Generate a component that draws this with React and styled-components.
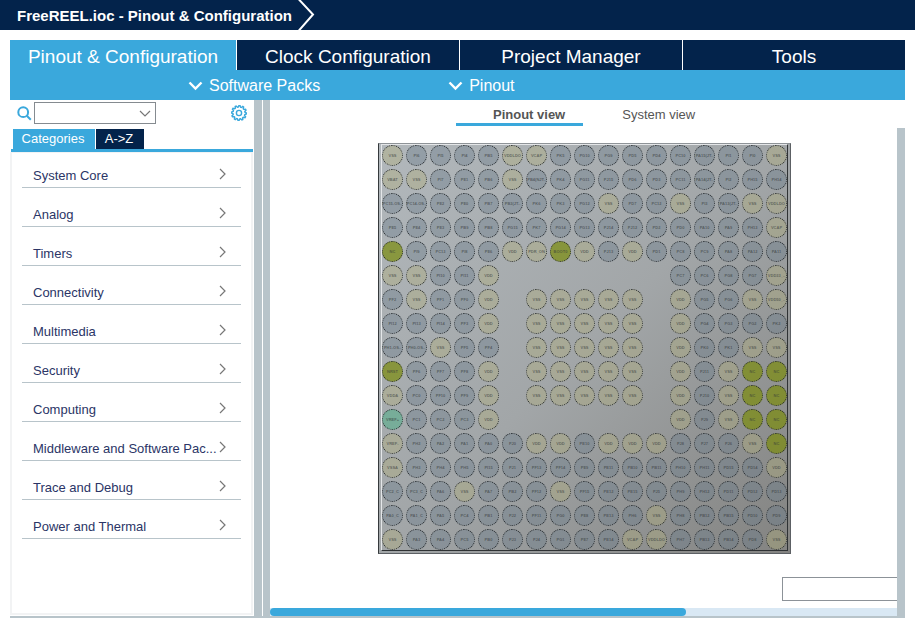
import React, { useState } from "react";
import styled, { createGlobalStyle } from "styled-components";

const navy = "#03234b";
const blue = "#3aa8dc";
const grey = "#b8c4ca";

const GlobalStyle = createGlobalStyle`
  * {
    box-sizing: border-box;
  }
  body {
    margin: 0;
    background: #fff;
    font-family: "Liberation Sans", Arial, sans-serif;
    font-size: 13px;
  }
  button {
    margin: 0;
    padding: 0;
    border: 0;
    background: none;
    font: inherit;
    color: inherit;
    cursor: pointer;
  }
`;

const TitleBar = styled.header`
  display: flex;
  align-items: center;
  height: 30px;
  padding-left: 17px;
  background: ${navy};
  color: #fff;
`;

const Title = styled.h1`
  margin: 0;
  padding-top: 2px;
  font-size: 15px;
  font-weight: bold;
  line-height: 28px;
  white-space: nowrap;
`;

const Crumb = styled.svg`
  width: 18px;
  height: 30px;
  margin-left: 5px;
  fill: none;
  stroke: #fff;
  stroke-width: 2;
`;

const Page = styled.main`
  padding: 10px;
`;

const MainTabs = styled.nav`
  display: grid;
  grid-template-columns: 226px 1fr 1fr 1fr;
  gap: 1px;
`;

const MainTab = styled.button`
  && {
    height: 30px;
    padding-top: 4px;
    background: ${(props) => (props.$active ? blue : navy)};
    color: #fff;
    font-size: 19px;
    line-height: 26px;
    white-space: nowrap;
  }
`;

const SubBar = styled.div`
  display: flex;
  gap: 128px;
  height: 30px;
  padding: 0 178px;
  background: ${blue};
`;

const SubMenu = styled.button`
  && {
    display: flex;
    align-items: center;
    gap: 6px;
    padding-top: 2px;
    color: #fff;
    font-size: 16px;
    white-space: nowrap;
  }
`;

const Icon = styled.svg`
  display: block;
  flex: none;
  fill: none;
  stroke: ${(props) => props.$color || "#fff"};
  stroke-width: ${(props) => props.$weight || 1};
`;

const Body = styled.div`
  display: flex;
  border-bottom: 2px solid ${grey};
`;

const Sidebar = styled.aside`
  display: flex;
  flex-direction: column;
  flex: none;
  width: 244px;
  padding: 2px 1px 1px 0;
`;

const SearchRow = styled.div`
  display: flex;
  align-items: center;
  height: 22px;
  padding: 0 6px 0 7px;
`;

const SearchField = styled.div`
  display: grid;
  align-items: center;
  width: 122px;
  height: 22px;
  margin-left: 2px;
  margin-right: auto;

  & > * {
    grid-area: 1 / 1;
  }
  svg {
    justify-self: end;
    margin-right: 5px;
    pointer-events: none;
  }
`;

const SearchSelect = styled.select`
  width: 100%;
  height: 22px;
  border: 1px solid #858b90;
  border-radius: 0;
  background: #fff;
  appearance: none;
`;

const SideTabs = styled.div`
  display: flex;
  gap: 1px;
  margin: 5px 0 0 1px;
  padding-left: 2px;
  border-bottom: 3px solid ${blue};
`;

const SideTab = styled.button`
  && {
    width: ${(props) => (props.$active ? "82px" : "48px")};
    height: 20px;
    padding-right: 2px;
    background: ${(props) => (props.$active ? blue : navy)};
    color: #fff;
    line-height: 20px;
  }
`;

const CategoryList = styled.ul`
  flex: 1;
  margin: 0;
  padding: 0 10px;
  border: solid #f2f3f4;
  border-width: 1px 2px 2px;
  list-style: none;
`;

const Category = styled.button`
  && {
    display: flex;
    align-items: flex-end;
    justify-content: space-between;
    width: 100%;
    height: 39px;
    padding: 0 15px 3px 11px;
    border-bottom: 1px solid ${grey};
    color: #2b3566;
    line-height: 16px;
    white-space: nowrap;
  }
  li:first-child > & {
    height: 35px;
  }
  svg {
    margin-bottom: 4px;
  }
`;

const Splitter = styled.div`
  display: grid;
  grid-template-columns: 8px 7px;
  gap: 1px;
  flex: none;
  &::before,
  &::after {
    content: "";
    background: ${grey};
  }
`;

const Viewer = styled.section`
  flex: 1;
  min-width: 0;
`;

const ViewTabs = styled.div`
  display: flex;
  gap: 2px;
  height: 28px;
  padding-left: 186px;
`;

const ViewTab = styled.button`
  && {
    height: 26px;
    padding: 5px 18px 0 37px;
    border-bottom: 3px solid ${(props) => (props.$active ? blue : "transparent")};
    color: #555;
    font-weight: ${(props) => (props.$active ? "bold" : "normal")};
    white-space: nowrap;
  }
`;

const CanvasRow = styled.div`
  display: grid;
  grid-template-columns: minmax(0, 1fr) 8px;
`;

const Canvas = styled.div`
  display: flex;
  flex-direction: column;
  padding: 15px 0 0 2px;
`;

const VScroll = styled.div`
  background: ${grey};
`;

const Chip = styled.div`
  align-self: center;
  padding: 0 2px 2px;
  border: 1px solid #5c6064;
  border-top-color: #8e9397;
  border-left-color: #35393c;
  background: linear-gradient(135deg, #b2b8bc 0%, #a2a6a8 50%, #838381 100%);
`;

const PinGrid = styled.div`
  display: grid;
  grid-template-columns: repeat(17, 21px);
  grid-auto-rows: 21px;
  gap: 3px;
  border: 1px solid #2f3234;
  border-top-color: #e4e6e8;
  border-left-color: #e4e6e8;
`;

const pinColors = {
  io: "rgba(104, 122, 138, 0.4)",
  power: "rgba(176, 172, 122, 0.4)",
  fixed: "rgba(124, 140, 16, 0.72)",
  vref: "rgba(90, 175, 140, 0.62)",
};

const Pin = styled.button`
  && {
    display: flex;
    align-items: center;
    justify-content: center;
    border: 1px dotted #25292c;
    border-radius: 50%;
    background: ${(props) => pinColors[props.$kind]};
    color: rgba(50, 54, 56, 0.6);
    font-size: 4px;
    font-weight: bold;
    line-height: 4px;
    white-space: nowrap;
  }
`;

const PinSearch = styled.input`
  align-self: flex-end;
  width: 115px;
  height: 24px;
  margin: 23px 0 7px;
  border: 1px solid #8c9298;
  border-right: 0;
  border-radius: 0;
  background: #fff;
`;

const HScroll = styled.div`
  height: 8px;
  background: #d9e8f4;
`;

const HThumb = styled.div`
  width: 66.3%;
  height: 8px;
  border-radius: 4px;
  background: ${blue};
`;

const categories = [
  "System Core",
  "Analog",
  "Timers",
  "Connectivity",
  "Multimedia",
  "Security",
  "Computing",
  "Middleware and Software Pac...",
  "Trace and Debug",
  "Power and Thermal",
];

// one line per ball row, "-" is an empty position
const balls = `
VSS PI6 PI5 PI4 PB5 VDDLDO VCAP PK5 PG10 PG9 PD5 PD4 PC10 PA15(JT.. PI1 PI0 VSS
VBAT VSS PI7 PE1 PB6 VSS PB4(NJT.. PK4 PG11 PJ15 PD6 PD3 PC11 PA14(JT.. PI2 PH15 PH14
PC15-OS.. PC14-OS.. PE2 PE0 PB7 PB3(JT.. PK6 PK3 PG12 VSS PD7 PC12 VSS PI3 PA13(JT.. VSS VDDLDO
PE5 PE4 PE3 PB9 PB8 PG15 PK7 PG14 PG13 PJ14 PJ12 PD2 PD0 PA10 PA9 PH13 VCAP
NC PI9 PC13 PI8 PE6 VDD PDR_ON BOOT0 VDD PJ13 VDD PD1 PC8 PC9 PA8 PA12 PA11
VSS VSS PI10 PI11 VDD - - - - - - - PC7 PC6 PG8 PG7 VDD33_..
PF2 VSS PF1 PF0 VDD - VSS VSS VSS VSS VSS - VDD PG5 PG6 VSS VDD50_..
PI12 PI13 PI14 PF3 VDD - VSS VSS VSS VSS VSS - VDD PG4 PG3 PG2 PK2
PH1-OS.. PH0-OS.. VSS PF5 PF4 - VSS VSS VSS VSS VSS - VDD PK0 PK1 VSS VSS
NRST PF6 PF7 PF8 VDD - VSS VSS VSS VSS VSS - VDD PJ11 VSS NC NC
VDDA PC0 PF10 PF9 VDD - VSS VSS VSS VSS VSS - VDD PJ10 VSS NC NC
VREF+ PC1 PC2 PC3 VDD - - - - - - - VDD PJ9 VSS NC NC
VREF- PH2 PA2 PA1 PA0 PJ0 VDD VDD PE10 VDD VDD VDD PJ8 PJ7 PJ6 VSS NC
VSSA PH3 PH4 PH5 PI15 PJ1 PF13 PF14 PE9 PE11 PB10 PB11 PH10 PH11 PD15 PD14 VDD
PC2_C PC3_C PA6 VSS PA7 PB2 PF12 VSS PF15 PE12 PE15 PJ5 PH9 PH12 PD11 PD12 PD13
PA0_C PA1_C PA5 PC4 PB1 PJ2 PF11 PG0 PE8 PE13 PH6 VSS PH8 PB12 PB15 PD10 PD9
VSS PA3 PA4 PC5 PB0 PJ3 PJ4 PG1 PE7 PE14 VCAP VDDLDO PH7 PB13 PB14 PD8 VSS
`
  .trim()
  .split(/\s+/);

const pinKind = (name) => {
  if (name === "VREF+") return "vref";
  if (["NC", "BOOT0", "NRST"].includes(name)) return "fixed";
  if (name.startsWith("V") || name === "PDR_ON") return "power";
  return "io";
};

// 12 small teeth round the gear body
const gearPath = () => {
  const points = [];
  for (let i = 0; i < 48; i++) {
    const r = i % 4 < 2 ? 7.6 : 6;
    const a = (i / 48) * Math.PI * 2;
    points.push(`${(8 + r * Math.cos(a)).toFixed(2)} ${(8 + r * Math.sin(a)).toFixed(2)}`);
  }
  return `M${points.join("L")}Z`;
};

const MenuArrow = () => (
  <Icon width="15" height="10" viewBox="0 0 15 10" $weight={2.4}>
    <path d="M1.5 1.5L7.5 7.5L13.5 1.5" />
  </Icon>
);

const ChipView = () => (
  <Chip>
    <PinGrid>
      {balls.map((name, i) =>
        name === "-" ? (
          <span key={i} />
        ) : (
          <Pin key={i} $kind={pinKind(name)}>
            {name}
          </Pin>
        )
      )}
    </PinGrid>
  </Chip>
);

export default function App() {
  const [tab, setTab] = useState("Pinout & Configuration");
  const [sideTab, setSideTab] = useState("Categories");
  const [view, setView] = useState("Pinout view");

  return (
    <>
      <GlobalStyle />
      <TitleBar>
        <Title>FreeREEL.ioc - Pinout &amp; Configuration</Title>
        <Crumb viewBox="0 0 18 30">
          <path d="M1.5 -1L16 14.5L1.5 31" />
        </Crumb>
      </TitleBar>
      <Page>
        <MainTabs>
          {["Pinout & Configuration", "Clock Configuration", "Project Manager", "Tools"].map(
            (name) => (
              <MainTab key={name} $active={tab === name} onClick={() => setTab(name)}>
                {name}
              </MainTab>
            )
          )}
        </MainTabs>
        <SubBar>
          <SubMenu>
            <MenuArrow />
            Software Packs
          </SubMenu>
          <SubMenu>
            <MenuArrow />
            Pinout
          </SubMenu>
        </SubBar>
        <Body>
          <Sidebar>
            <SearchRow>
              <label htmlFor="search" aria-label="Search">
                <Icon width="15" height="15" viewBox="0 0 15 15" $color={blue} $weight={2}>
                  <circle cx="6.2" cy="6.2" r="4.9" />
                  <path d="M9.8 9.8L13.8 13.8" />
                </Icon>
              </label>
              <SearchField>
                <SearchSelect id="search" />
                <Icon width="12" height="7" viewBox="0 0 12 7" $color="#777" $weight={1.2}>
                  <path d="M1 1L6 6L11 1" />
                </Icon>
              </SearchField>
              <button aria-label="Settings">
                <Icon width="16" height="16" viewBox="0 0 16 16" $color={blue} $weight={1.4}>
                  <path d={gearPath()} />
                  <circle cx="8" cy="8" r="2.6" />
                </Icon>
              </button>
            </SearchRow>
            <SideTabs>
              <SideTab $active={sideTab === "Categories"} onClick={() => setSideTab("Categories")}>
                Categories
              </SideTab>
              <SideTab $active={sideTab === "A->Z"} onClick={() => setSideTab("A->Z")}>
                A-&gt;Z
              </SideTab>
            </SideTabs>
            <CategoryList>
              {categories.map((name) => (
                <li key={name}>
                  <Category>
                    {name}
                    <Icon width="7" height="12" viewBox="0 0 7 12" $color="#777" $weight={1.2}>
                      <path d="M1 1L6 6L1 11" />
                    </Icon>
                  </Category>
                </li>
              ))}
            </CategoryList>
          </Sidebar>
          <Splitter />
          <Viewer>
            <ViewTabs>
              {["Pinout view", "System view"].map((name) => (
                <ViewTab key={name} $active={view === name} onClick={() => setView(name)}>
                  {name}
                </ViewTab>
              ))}
            </ViewTabs>
            <CanvasRow>
              <div>
                <Canvas>
                  <ChipView />
                  <PinSearch aria-label="Find pin" />
                </Canvas>
                <HScroll>
                  <HThumb />
                </HScroll>
              </div>
              <VScroll />
            </CanvasRow>
          </Viewer>
        </Body>
      </Page>
    </>
  );
}
